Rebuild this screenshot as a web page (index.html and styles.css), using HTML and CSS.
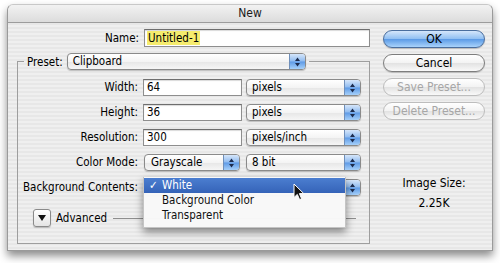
FILE: index.html
```html
<!doctype html>
<html lang="en-US">
<head>
<title>New</title>
<link rel="stylesheet" href="styles.css">
</head>
<body>
<div class="window">
	<div class="titlebar">New</div>
	<div class="body">
		<div class="main">
			<div class="name-row">
				<span class="lbl">Name:</span>
				<div class="field name-field"><span class="sel">Untitled-1</span></div>
			</div>
			<fieldset class="group">
				<legend class="legend">
					<span class="legend-lbl">Preset:</span>
					<div class="popup preset-popup"><span class="ptext">Clipboard</span><span class="cap"><svg width="7" height="10" viewBox="0 0 7 10"><path d="M3.5 0.5 L6 4 L1 4 Z M1 6 L6 6 L3.5 9.5 Z" fill="#1d2c4e"/></svg></span></div>
				</legend>
				<div class="grid">
					<span class="lbl">Width:</span>
					<div class="field">64</div>
					<div class="popup"><span class="ptext">pixels</span><span class="cap"><svg width="7" height="10" viewBox="0 0 7 10"><path d="M3.5 0.5 L6 4 L1 4 Z M1 6 L6 6 L3.5 9.5 Z" fill="#1d2c4e"/></svg></span></div>

					<span class="lbl">Height:</span>
					<div class="field">36</div>
					<div class="popup"><span class="ptext">pixels</span><span class="cap"><svg width="7" height="10" viewBox="0 0 7 10"><path d="M3.5 0.5 L6 4 L1 4 Z M1 6 L6 6 L3.5 9.5 Z" fill="#1d2c4e"/></svg></span></div>

					<span class="lbl">Resolution:</span>
					<div class="field">300</div>
					<div class="popup"><span class="ptext">pixels/inch</span><span class="cap"><svg width="7" height="10" viewBox="0 0 7 10"><path d="M3.5 0.5 L6 4 L1 4 Z M1 6 L6 6 L3.5 9.5 Z" fill="#1d2c4e"/></svg></span></div>

					<span class="lbl">Color Mode:</span>
					<div class="popup mode-popup"><span class="ptext">Grayscale</span><span class="cap"><svg width="7" height="10" viewBox="0 0 7 10"><path d="M3.5 0.5 L6 4 L1 4 Z M1 6 L6 6 L3.5 9.5 Z" fill="#1d2c4e"/></svg></span></div>
					<div class="popup"><span class="ptext">8 bit</span><span class="cap"><svg width="7" height="10" viewBox="0 0 7 10"><path d="M3.5 0.5 L6 4 L1 4 Z M1 6 L6 6 L3.5 9.5 Z" fill="#1d2c4e"/></svg></span></div>

					<span class="lbl">Background Contents:</span>
					<div class="popup wide-popup"><span class="ptext"></span><span class="cap"><svg width="7" height="10" viewBox="0 0 7 10"><path d="M3.5 0.5 L6 4 L1 4 Z M1 6 L6 6 L3.5 9.5 Z" fill="#1d2c4e"/></svg></span>
						<div class="menu">
							<div class="item active"><span class="check">&#10003;</span>White</div>
							<div class="item"><span class="check"></span>Background Color</div>
							<div class="item"><span class="check"></span>Transparent</div>
						</div>
					</div>
				</div>
				<div class="advanced">
					<span class="disclosure"><svg width="8" height="6" viewBox="0 0 8 6"><path d="M0 0 L8 0 L4 6 Z" fill="#111"/></svg></span>
					<span class="adv-lbl">Advanced</span>
					<span class="rule"></span>
				</div>
			</fieldset>
		</div>
		<div class="side">
			<div class="btn default">OK</div>
			<div class="btn">Cancel</div>
			<div class="btn disabled">Save Preset...</div>
			<div class="btn disabled">Delete Preset...</div>
			<div class="size">
				<div>Image Size:</div>
				<div class="size-val">2.25K</div>
			</div>
		</div>
	</div>
	<svg class="cursor" width="12" height="18" viewBox="0 0 12 18"><path d="M1 1 L1 14.5 L4.3 11.4 L6.6 16.6 L8.6 15.7 L6.4 10.6 L10.8 10.6 Z" fill="#111" stroke="#fff" stroke-width="1"/></svg>
</div>
</body>
</html>
```
FILE: styles.css
```css
html, body {
	margin: 0;
	background: #fff;
}
body {
	font-family: "DejaVu Sans Condensed", "DejaVu Sans", sans-serif;
	font-size: 11.5px;
	color: #000;
	width: 500px;
	height: 263px;
	overflow: hidden;
}
.window {
	position: relative;
	margin: 4px 0 0 7px;
	width: 484px;
	height: 245px;
	border: 1px solid #9a9a9a;
	border-top-color: #c8c8c8;
	border-radius: 6px 6px 0 0;
	box-shadow: 0 5px 9px rgba(0, 0, 0, 0.45);
	background: repeating-linear-gradient(to bottom, #efefef 0, #efefef 2px, #e7e7e7 2px, #e7e7e7 4px);
}
.titlebar {
	height: 17px;
	line-height: 16px;
	text-align: center;
	font-size: 12px;
	color: #1a1a1a;
	border-bottom: 1px solid #9c9c9c;
	border-radius: 6px 6px 0 0;
	background: linear-gradient(to bottom, #f2f2f2, #dcdcdc);
}
.body {
	display: flex;
}
.main {
	width: 353px;
	padding: 6px 0 0 9px;
}
.side {
	flex: 1;
	padding: 7px 0 0 13px;
	display: flex;
	flex-direction: column;
	gap: 6px;
}
.lbl {
	text-align: right;
	line-height: 17px;
}
.name-row {
	display: grid;
	grid-template-columns: 122px 226px;
	column-gap: 5px;
	height: 18px;
}
.name-row .lbl {
	line-height: 18px;
}
.field {
	height: 15px;
	line-height: 15px;
	padding: 0 3px;
	background: #fff;
	border: 1px solid #8e8e8e;
	border-top-color: #6e6e6e;
	box-shadow: inset 0 1px 1px rgba(0, 0, 0, 0.15);
}
.name-field {
	height: 16px;
	line-height: 16px;
}
.sel {
	background: #f5ec6e;
	padding: 0 1px;
	margin-left: -1px;
}
.group {
	margin: 6px 0 0;
	padding: 0 0 16px;
	border: 1px solid #9e9e9e;
	min-width: 0;
	width: 351px;
}
.legend {
	display: flex;
	align-items: center;
	gap: 4px;
	margin-left: 6px;
	padding: 0 3px;
}
.preset-popup {
	width: 237px;
}
.grid {
	display: grid;
	grid-template-columns: 121px 99px 115px;
	grid-auto-rows: 17px;
	column-gap: 4px;
	row-gap: 8px;
	padding-top: 9px;
}
.grid .lbl {
	margin-right: 1px;
}
.popup {
	position: relative;
	display: flex;
	height: 15px;
	border: 1px solid #8a8a8a;
	border-radius: 4px;
	background: linear-gradient(to bottom, #ffffff, #f4f4f4 50%, #e6e6e6 51%, #f6f6f6);
	box-shadow: 0 1px 1px rgba(0, 0, 0, 0.2);
}
.ptext {
	flex: 1;
	line-height: 15px;
	padding-left: 5px;
}
.cap {
	width: 15px;
	display: flex;
	align-items: center;
	justify-content: center;
	border-left: 1px solid #6f8fba;
	border-radius: 0 3px 3px 0;
	background: linear-gradient(to bottom, #d6e6fa, #8fbbf0 48%, #5e9ae6 52%, #a6d0fa);
}
.mode-popup {
	width: 94px;
	margin-left: 1px;
}
.mode-popup .ptext {
	padding-left: 6px;
}
.wide-popup {
	grid-column: 2 / 4;
	margin-left: 1px;
}
.menu {
	position: absolute;
	left: -2px;
	top: -3px;
	width: 201px;
	padding: 1px 0 4px;
	background: rgba(248, 248, 248, 0.98);
	box-shadow: 0 4px 8px rgba(0, 0, 0, 0.45);
	border: 1px solid #c4c4c4;
	border-top: none;
	z-index: 5;
}
.item {
	line-height: 15px;
	padding-left: 5px;
	color: #111;
}
.item.active {
	background: linear-gradient(to bottom, #4b7ed0, #3563b8);
	color: #fff;
}
.check {
	display: inline-block;
	width: 13px;
}
.advanced {
	display: flex;
	align-items: center;
	margin-top: 13px;
	padding-left: 15px;
	height: 18px;
}
.disclosure {
	width: 16px;
	height: 16px;
	display: flex;
	align-items: center;
	justify-content: center;
	border: 1px solid #8a8a8a;
	border-radius: 3px;
	background: linear-gradient(to bottom, #ffffff, #e4e4e4);
	box-shadow: 0 1px 1px rgba(0, 0, 0, 0.2);
}
.adv-lbl {
	margin-left: 5px;
}
.rule {
	width: 243px;
	margin-left: 6px;
	border-top: 1px solid #8e8e8e;
	height: 0;
}
.btn {
	width: 100px;
	height: 16px;
	line-height: 16px;
	text-align: center;
	font-size: 12px;
	border: 1px solid #7d7d7d;
	border-radius: 9px;
	background: linear-gradient(to bottom, #ffffff, #f3f3f3 50%, #e2e2e2 51%, #f9f9f9);
	box-shadow: 0 1px 1px rgba(0, 0, 0, 0.2);
}
.btn.default {
	border-color: #4a6e9e;
	background: linear-gradient(to bottom, #d4e6fb, #92c0f2 48%, #5c9be6 52%, #a9d3fb);
}
.btn.disabled {
	color: #a6a6a6;
	border-color: #bdbdbd;
	box-shadow: none;
}
.size {
	margin-top: 47px;
	width: 102px;
	text-align: center;
	line-height: 20px;
	font-size: 12px;
}
.cursor {
	position: absolute;
	left: 285px;
	top: 178px;
	z-index: 10;
}
```
